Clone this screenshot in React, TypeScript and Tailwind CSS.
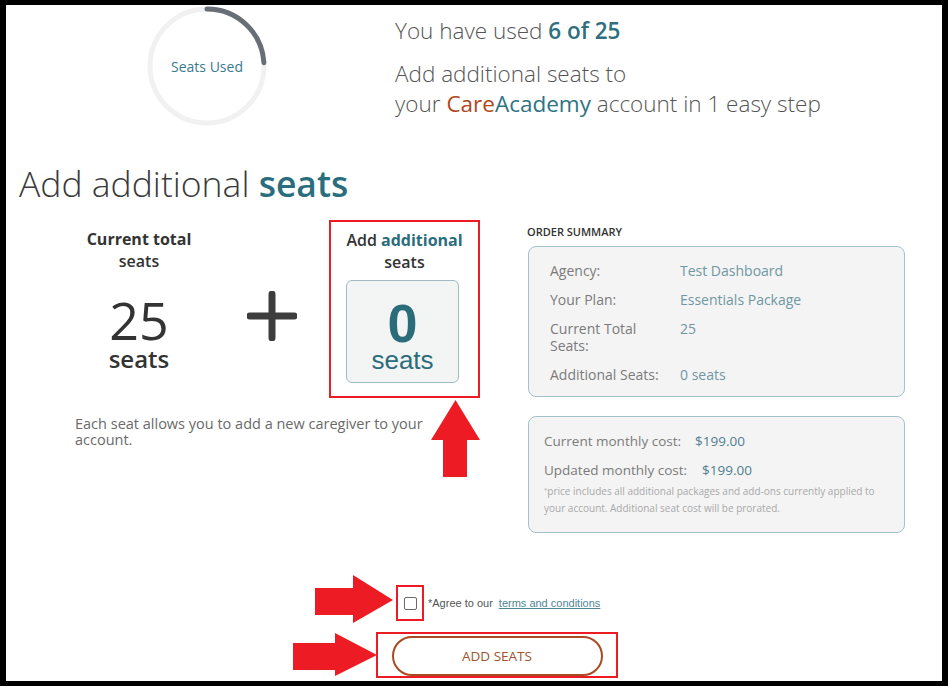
import React from "react";

const RED = "#ed1c24";

function SeatsRing({ used, total }: { used: number; total: number }) {
  const r = 57;
  const c = 2 * Math.PI * r;
  const frac = used / total;
  return (
    <div className="relative h-[120px] w-[120px]">
      <svg width="120" height="120" viewBox="0 0 120 120" className="absolute inset-0">
        <circle cx="60" cy="60" r={r} fill="none" stroke="#f1f1f1" strokeWidth="5" />
        <circle
          cx="60"
          cy="60"
          r={r}
          fill="none"
          stroke="#686e76"
          strokeWidth="5"
          strokeLinecap="round"
          strokeDasharray={`${c * frac} ${c}`}
          transform="rotate(-90 60 60)"
        />
      </svg>
      <div className="absolute inset-0 flex items-center justify-center text-[14px] text-[#3b7a8b]">Seats Used</div>
    </div>
  );
}

function SummaryRow({ label, value }: { label: string; value: string }) {
  return (
    <div className="flex">
      <div className="w-[130px] shrink-0 pr-4 text-[#7b7b7b]">{label}</div>
      <div className="text-[#6f97a3]">{value}</div>
    </div>
  );
}

export default function App() {
  return (
    <div
      className="relative h-[686px] w-[948px] overflow-hidden bg-black pb-[5px] pl-[6px] pr-[6px] pt-[5px]"
      style={{ fontFamily: '"Open Sans", "Noto Sans", sans-serif' }}
    >
      <div className="h-full w-full bg-white">
        {/* top */}
        <div className="flex">
          <div className="ml-[141px] mt-[1px]">
            <SeatsRing used={6} total={25} />
          </div>
          <div className="ml-[128px] mt-[11px] font-light text-[#555]">
            <p className="text-[22.5px] leading-[30px]">
              You have used <span className="font-semibold text-[#2f6f7e]">6 of 25</span>
            </p>
            <p className="mt-[13px] text-[22.5px] leading-[30px]">
              Add additional seats to
              <br />
              your <span className="font-normal text-[#b0461c]">Care</span>
              <span className="font-normal text-[#2f7385]">Academy</span> account in 1 easy step
            </p>
          </div>
        </div>

        <h1 className="ml-[13px] mt-[37px] text-[35.5px] font-light leading-[40px] text-[#3a3a3a]">
          Add additional <span className="font-semibold text-[#2a6d7c]">seats</span>
        </h1>

        <div className="mt-[17px] flex">
          {/* left */}
          <div className="w-[522px] shrink-0">
            <div className="flex">
              <div className="ml-[58px] w-[150px] pt-[8px] text-center text-[#333]">
                <p className="text-[16px] font-bold leading-[22px]">
                  Current total
                  <br />
                  <span className="font-semibold">seats</span>
                </p>
                <p className="mt-[22px] text-[52px] leading-[52px]">25</p>
                <p className="-mt-[1px] text-[24px] font-semibold leading-[28px]">seats</p>
              </div>
              <div className="flex w-[115px] items-start justify-center pt-[71px]">
                <svg width="50" height="50" viewBox="0 0 50 50">
                  <path d="M25 3 V47 M3 25 H47" stroke="#3d3d3d" strokeWidth="7" strokeLinecap="round" />
                </svg>
              </div>
              <div className="h-[178px] w-[151px] border-2 border-[#ed1c24] pt-[7px] text-center text-[#333]">
                <p className="text-[16px] font-semibold leading-[22px]">
                  Add <span className="font-bold text-[#2a6d7c]">additional</span>
                  <br />
                  seats
                </p>
                <div
                  className="ml-[15px] mt-[7px] flex h-[103px] w-[113px] flex-col items-center rounded-[6px] border border-[#9dbcc6] bg-[#f3f4f4] pt-[18px] text-[#2b6c7b]"
                  style={{ fontFamily: '"Liberation Sans", Arial, sans-serif' }}
                >
                  <span className="text-[54px] font-bold leading-[48px]">0</span>
                  <span className="text-[26px] leading-[26px]">seats</span>
                </div>
              </div>
            </div>
            <p className="ml-[69px] mt-[18px] w-[360px] text-[14.5px] leading-[16px] text-[#6a6a6a]">
              Each seat allows you to add a new caregiver to your account.
            </p>
          </div>

          {/* right */}
          <div className="w-[377px]">
            <p className="ml-[-1px] mt-[4px] text-[11px] font-semibold leading-[16px] text-[#333]">ORDER SUMMARY</p>
            <div className="mt-[6px] flex h-[151px] flex-col gap-[12px] rounded-[8px] border border-[#a3c2cc] bg-[#f4f4f4] pl-[21px] pt-[15px] text-[14px] leading-[17px]">
              <SummaryRow label="Agency:" value="Test Dashboard" />
              <SummaryRow label="Your Plan:" value="Essentials Package" />
              <SummaryRow label="Current Total Seats:" value="25" />
              <SummaryRow label="Additional Seats:" value="0 seats" />
            </div>
            <div className="mt-[19px] h-[117px] rounded-[8px] border border-[#a3c2cc] bg-[#f4f4f4] pl-[15px] pr-[12px] pt-[14px]">
              <p className="flex text-[13.5px] leading-[20px] text-[#7b7b7b]">
                <span className="w-[151px] shrink-0">Current monthly cost:</span>
                <span className="text-[#4f7f8e]">$199.00</span>
              </p>
              <p className="mt-[9px] flex text-[13.5px] leading-[20px] text-[#7b7b7b]">
                <span className="w-[158px] shrink-0">Updated monthly cost:</span>
                <span className="text-[#4f7f8e]">$199.00</span>
              </p>
              <p className="mt-[3px] text-[10px] leading-[17px] text-[#a8a8a8]">
                <sup className="text-[6px]">*</sup>price includes all additional packages and add-ons currently applied to your account. Additional seat cost will be prorated.
              </p>
            </div>
          </div>
        </div>

        {/* agree + button */}
        <div style={{ fontFamily: '"Liberation Sans", Arial, sans-serif' }}>
          <div className="ml-[390px] mt-[52px] flex items-center">
            <div className="flex h-[36px] w-[28px] items-center justify-center border-2 border-[#ed1c24]">
              <div className="h-[13px] w-[13px] rounded-[2px] border-[1.5px] border-[#6a6a6a] bg-white" />
            </div>
            <span className="ml-[4px] text-[11px] text-[#555]">*Agree to our</span>
            <span className="ml-[6px] text-[11px] text-[#4f8595] underline">terms and conditions</span>
          </div>
          <div className="ml-[370px] mt-[11px] flex h-[46px] w-[242px] items-start justify-center border-2 border-[#ed1c24] pt-[2px]">
            <button
              type="button"
              className="h-[40px] w-[211px] rounded-full border-2 border-[#a84a22] bg-white text-[13.5px] text-[#a0522d]"
              style={{ fontFamily: '"Open Sans", sans-serif' }}
            >
              ADD SEATS
            </button>
          </div>
        </div>
      </div>

      {/* annotation arrows */}
      <svg className="absolute left-[431px] top-[400px]" width="49" height="78" viewBox="0 0 49 78">
        <polygon points="24.5,0 49,40 36,40 36,77 12,77 12,40 0,40" fill={RED} />
      </svg>
      <svg className="absolute left-[314px] top-[575px]" width="80" height="49" viewBox="0 0 80 49">
        <polygon points="1,13 39,13 39,0 79,25 39,48 39,40 1,40" fill={RED} />
      </svg>
      <svg className="absolute left-[293px] top-[632px]" width="85" height="45" viewBox="0 0 85 45">
        <polygon points="0,11 42,11 42,1 84,23 42,44 42,38 0,38" fill={RED} />
      </svg>
    </div>
  );
}
